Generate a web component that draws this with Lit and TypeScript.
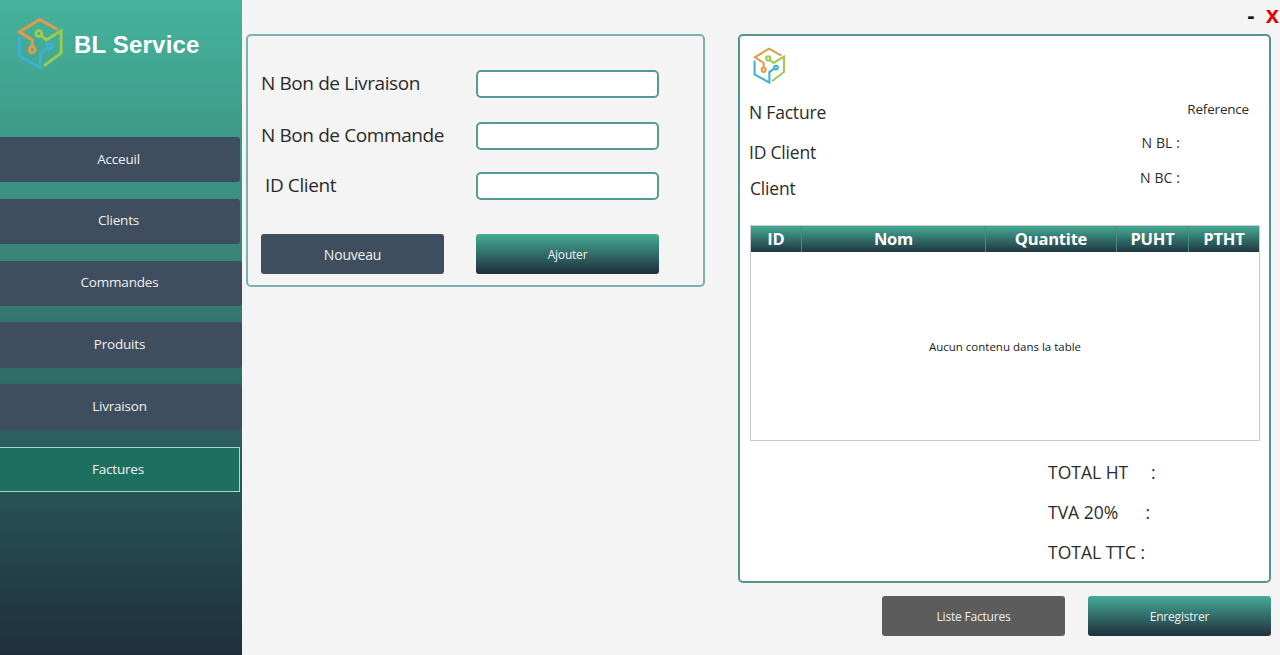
import { LitElement, html, css, svg } from "lit";
import { customElement } from "lit/decorators.js";

const logo = (cls: string) => html`<svg class=${cls} viewBox="50 50 145 162" fill="none" stroke-width="9">
  ${svg`<path stroke="#e9994a" d="M97 141V120L58 95L120 57L175 88"/>
  <circle stroke="#e9994a" cx="97" cy="150" r="9"/>
  <circle stroke="#9ccb4f" cx="117" cy="100" r="9"/>
  <path stroke="#9ccb4f" d="M124 106L140 120L186 92V160L133 200"/>
  <path stroke="#3cb1d3" d="M57 110V170L122 206V160L143 145"/>
  <circle stroke="#3cb1d3" cx="151" cy="140" r="8"/>`}
</svg>`;

const NAV = ["Acceuil", "Clients", "Commandes", "Produits", "Livraison", "Factures"];
const COLS = ["ID", "Nom", "Quantite", "PUHT", "PTHT"];

@customElement("app-root")
export class AppRoot extends LitElement {
  static styles = css`
    :host {
      display: flex;
      width: 1280px;
      height: 655px;
      overflow: hidden;
      background: #f4f4f4;
      color: #2b2b2b;
      font-family: "Open Sans", "Noto Sans", sans-serif;
    }
    * {
      box-sizing: border-box;
    }

    .side {
      width: 242px;
      flex: none;
      display: flex;
      flex-direction: column;
      background: linear-gradient(#45b39b 0%, #3a8a7c 35%, #2a5a5c 70%, #1f2e3c 100%);
    }
    .brand {
      height: 137px;
      display: flex;
      align-items: flex-start;
      gap: 10px;
      padding: 17px 0 0 17px;
    }
    .logo-big {
      width: 47px;
      height: 53px;
    }
    .brand-name {
      margin-top: 14px;
      font-family: "Liberation Sans", Arial, sans-serif;
      font-size: 24px;
      font-weight: 700;
      letter-spacing: 0.2px;
      color: #fff;
      white-space: nowrap;
    }
    .nav {
      display: flex;
      flex-direction: column;
      gap: 16.4px;
    }
    .nav-item {
      width: 240px;
      height: 45.4px;
      display: flex;
      align-items: center;
      justify-content: center;
      padding: 0 3px 2px 0;
      background: #3f4e5e;
      border-radius: 0 3px 3px 0;
      color: #f0f0f0;
      font-size: 13.5px;
      letter-spacing: -0.2px;
    }
    .nav-item:nth-child(n + 3) {
      width: 242px;
    }
    .nav-item.active {
      width: 240px;
      margin-top: 1px;
      background: #1d7060;
      border: 1px solid #a6d8cb;
      border-left: none;
      border-radius: 0;
    }

    .main {
      flex: 1;
      display: flex;
      flex-direction: column;
      padding-right: 9px;
    }
    .win {
      height: 34px;
      display: flex;
      justify-content: flex-end;
      align-items: flex-start;
      gap: 11px;
      margin-right: -8px;
      font-family: "Liberation Sans", Arial, sans-serif;
      font-weight: 700;
      line-height: 1;
    }
    .min {
      font-size: 22px;
      color: #111;
      margin-top: 5px;
    }
    .close {
      font-size: 24px;
      color: #e80000;
      margin-top: 3px;
    }
    .body {
      display: flex;
      padding-left: 4px;
      gap: 33px;
    }
    .card {
      border: 2px solid #52948f;
      border-radius: 5px;
    }

    .form {
      width: 459px;
      height: 253px;
      padding: 34px 44px 0 13px;
      border-color: #7db2ae;
    }
    .field {
      height: 28px;
      display: flex;
      align-items: center;
      justify-content: space-between;
      margin-bottom: 23.5px;
      font-size: 19px;
      letter-spacing: -0.4px;
    }
    .field span {
      padding-bottom: 2px;
    }
    .field.id {
      margin-top: -1px;
      padding-left: 4px;
    }
    .input {
      width: 183px;
      height: 28px;
      flex: none;
      background: #fff;
      border: 2px solid #559a96;
      border-radius: 5px;
    }
    .actions {
      display: flex;
      justify-content: space-between;
      margin-top: 34px;
    }
    .btn {
      width: 183px;
      height: 40px;
      display: flex;
      align-items: center;
      justify-content: center;
      border-radius: 3px;
      color: #f0f0f0;
      font-size: 12px;
      letter-spacing: -0.2px;
    }
    .btn.slate {
      background: #3f4e5e;
      font-size: 14px;
    }
    .btn.grey {
      background: #5c5c5c;
    }
    .btn.grad {
      background: linear-gradient(#45ab96, #1f2e3c);
    }

    .right {
      width: 533px;
      display: flex;
      flex-direction: column;
    }
    .invoice {
      height: 549px;
      background: #fff;
      padding: 11px 11px 0 9px;
      display: flex;
      flex-direction: column;
    }
    .logo-small {
      width: 33px;
      height: 37px;
      margin-left: 4px;
      display: block;
    }
    .head {
      height: 141px;
      display: flex;
      justify-content: space-between;
    }
    .head-left {
      font-size: 17.5px;
      letter-spacing: -0.2px;
      line-height: 24px;
    }
    .head-left div {
      margin-bottom: 12px;
    }
    .head-left .client {
      padding-left: 1px;
    }
    .head-left .first {
      margin-top: 16px;
      margin-bottom: 16px;
    }
    .head-right {
      margin-top: -37px;
      padding: 53px 9px 0 0;
      font-size: 13.5px;
      letter-spacing: -0.2px;
      line-height: 18px;
      text-align: right;
    }
    .refs {
      padding-right: 69px;
      margin-top: 16px;
      display: flex;
      flex-direction: column;
      gap: 17px;
      font-size: 14px;
      letter-spacing: 0.1px;
    }
    .table {
      width: 510px;
      height: 216px;
      margin-left: 1px;
      border: 1px solid #c9c9c9;
      display: flex;
      flex-direction: column;
    }
    .thead {
      height: 26px;
      flex: none;
      display: grid;
      grid-template-columns: 51px 184px 131px 72px 1fr;
      background: linear-gradient(#45ab96, #1f3640);
      color: #fff;
      font-size: 16.5px;
      font-weight: 700;
      letter-spacing: -0.2px;
    }
    .thead span {
      display: flex;
      align-items: center;
      justify-content: center;
      padding-bottom: 1px;
      border-right: 1px solid #4a8a82;
    }
    .thead span:last-child {
      border-right: none;
    }
    .empty {
      flex: 1;
      display: flex;
      align-items: center;
      justify-content: center;
      font-size: 11.5px;
      color: #222;
    }
    .totals {
      margin: 11px 0 0 299px;
      display: flex;
      flex-direction: column;
      font-size: 17.5px;
    }
    .total {
      height: 40px;
      display: flex;
      align-items: center;
    }
    .total b {
      font-weight: 400;
      white-space: pre;
    }
    .footer {
      display: flex;
      justify-content: flex-end;
      gap: 23px;
      margin-top: 13px;
    }
  `;

  render() {
    return html`
      <aside class="side">
        <div class="brand">
          ${logo("logo-big")}
          <div class="brand-name">BL Service</div>
        </div>
        <nav class="nav">
          ${NAV.map(
            (n) => html`<div class="nav-item ${n === "Factures" ? "active" : ""}">${n}</div>`
          )}
        </nav>
      </aside>
      <div class="main">
        <div class="win">
          <span class="min">-</span>
          <span class="close">x</span>
        </div>
        <div class="body">
          <section class="card form">
            <div class="field"><span>N Bon de Livraison</span><div class="input"></div></div>
            <div class="field"><span>N Bon de Commande</span><div class="input"></div></div>
            <div class="field id"><span>ID Client</span><div class="input"></div></div>
            <div class="actions">
              <div class="btn slate">Nouveau</div>
              <div class="btn grad">Ajouter</div>
            </div>
          </section>
          <div class="right">
            <section class="card invoice">
              ${logo("logo-small")}
              <div class="head">
                <div class="head-left">
                  <div class="first">N Facture</div>
                  <div>ID Client</div>
                  <div class="client">Client</div>
                </div>
                <div class="head-right">
                  <div>Reference</div>
                  <div class="refs">
                    <span>N BL :</span>
                    <span>N BC :</span>
                  </div>
                </div>
              </div>
              <div class="table">
                <div class="thead">${COLS.map((c) => html`<span>${c}</span>`)}</div>
                <div class="empty">Aucun contenu dans la table</div>
              </div>
              <div class="totals">
                <div class="total"><b>TOTAL HT     :</b></div>
                <div class="total"><b>TVA 20%      :</b></div>
                <div class="total"><b>TOTAL TTC :</b></div>
              </div>
            </section>
            <div class="footer">
              <div class="btn grey">Liste Factures</div>
              <div class="btn grad">Enregistrer</div>
            </div>
          </div>
        </div>
      </div>
    `;
  }
}
